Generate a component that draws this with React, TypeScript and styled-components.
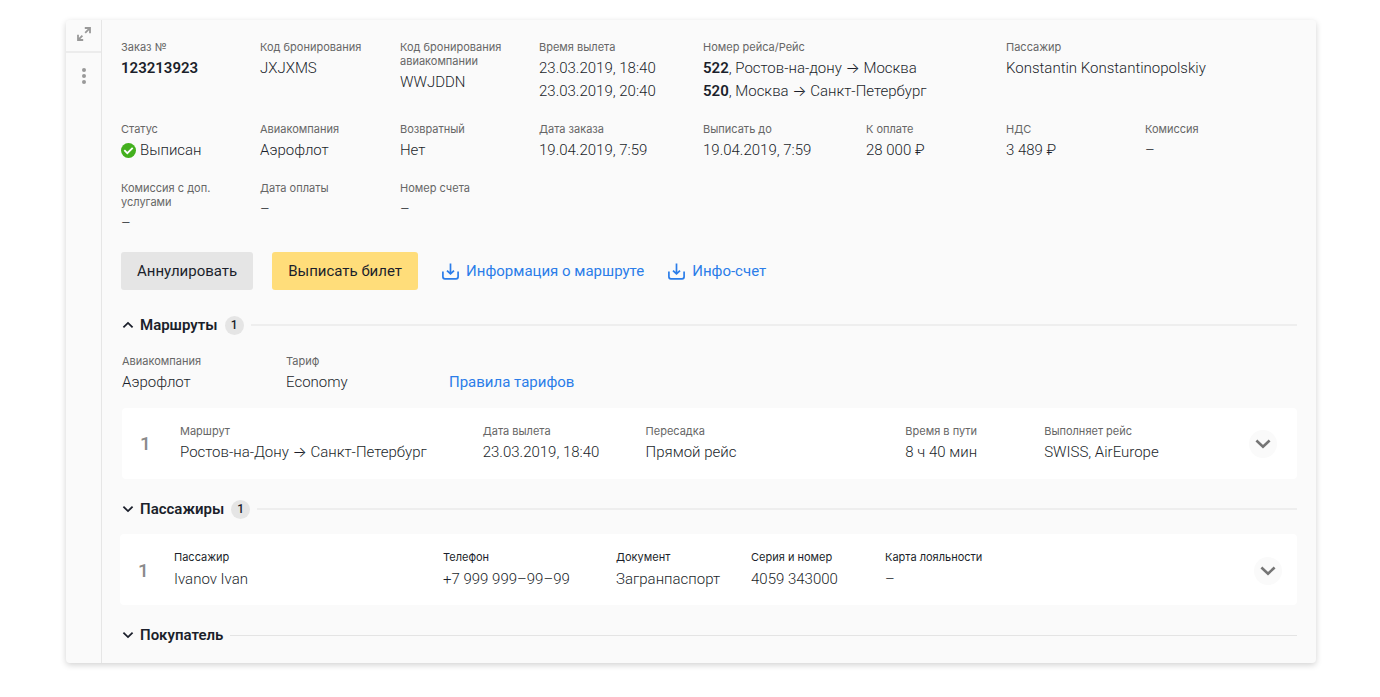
import React from "react";
import styled, { createGlobalStyle } from "styled-components";

const GlobalStyle = createGlobalStyle`
  *, *::before, *::after { box-sizing: border-box; }
  body {
    margin: 0;
    background: #fff;
    color: #1b1f2b;
    font-family: Roboto, "Liberation Sans", sans-serif;
    font-size: 15px;
    font-weight: 300;
    line-height: 23px;
  }
  button { font: inherit; color: inherit; border: 0; padding: 0; background: none; cursor: pointer; }
  h2, p, dl, dt, dd { margin: 0; font: inherit; }
`;

const Page = styled.div`
  padding: 20px 64px 32px 66px;
`;

const OrderCard = styled.article`
  display: flex;
  background: #fafafa;
  border-radius: 4px;
  box-shadow: 0 2px 6px rgba(0, 0, 0, 0.18);
`;

const Rail = styled.aside`
  flex: 0 0 36px;
  display: flex;
  flex-direction: column;
  border-right: 1px solid #e6e6e6;
  color: #999;
`;

const RailButton = styled.button<{ $divided?: boolean }>`
  display: flex;
  align-items: center;
  justify-content: center;
  height: ${(p) => (p.$divided ? 33 : 46)}px;
  padding-bottom: ${(p) => (p.$divided ? 4 : 0)}px;
  border-bottom: ${(p) => (p.$divided ? "2px solid #ececec" : "0")};
`;

const Main = styled.main`
  flex: 1;
  min-width: 0;
  padding: 20px 19px 16px 19px;
`;

const SummaryGrid = styled.dl`
  display: grid;
  grid-template-columns: 139fr 140fr 139fr 164fr 163fr 140fr 139fr 152fr;
  row-gap: 19px;
`;

const FieldBox = styled.div<{ $span?: number }>`
  min-width: 0;
  grid-column: span ${(p) => p.$span ?? 1};
`;

const Label = styled.dt<{ $dark?: boolean }>`
  max-width: 120px;
  margin-bottom: ${(p) => (p.$dark ? 4 : 3)}px;
  font-family: Inter, Roboto, "Liberation Sans", sans-serif;
  font-size: 11px;
  font-weight: 400;
  line-height: 14px;
  color: ${(p) => (p.$dark ? "#1b1f2b" : "#666")};
`;

const Value = styled.dd`
  display: flex;
  align-items: center;
  gap: 4px;
  white-space: nowrap;
`;

const Arrow = styled.span`
  font-family: Inter, sans-serif;
  line-height: 1;
`;

const Strong = styled.strong`
  font-weight: 600;
`;

const Actions = styled.div`
  display: flex;
  align-items: center;
  gap: 24px;
  margin: 17px 0 23px;
`;

const ButtonGroup = styled.div`
  display: flex;
  gap: 19px;
`;

const ActionButton = styled.button<{ $primary?: boolean }>`
  height: 38px;
  padding: 0 16px;
  border-radius: 3px;
  font-weight: 400;
  white-space: nowrap;
  background: ${(p) => (p.$primary ? "#ffdd7a" : "#e5e5e5")};
`;

const Link = styled.a`
  display: inline-flex;
  align-items: center;
  gap: 7px;
  font-weight: 400;
  color: #2b7de9;
  text-decoration: none;
  white-space: nowrap;
`;

const SectionHead = styled.div<{ $thin: boolean }>`
  display: flex;
  align-items: center;
  gap: 7px;
  height: 24px;
  padding-left: 1px;
  &::after {
    content: "";
    flex: 1;
    height: ${(p) => (p.$thin ? 1 : 2)}px;
    background: ${(p) => (p.$thin ? "#e4e4e4" : "#eeeeee")};
  }
`;

const Toggle = styled.button`
  display: flex;
  align-items: center;
  gap: 6px;
  font-weight: 600;
`;

const Badge = styled.span`
  display: inline-flex;
  align-items: center;
  justify-content: center;
  width: 19px;
  height: 19px;
  border-radius: 50%;
  background: #e5e5e5;
  font-size: 12px;
  font-weight: 500;
`;

const FareRow = styled.dl`
  display: grid;
  grid-template-columns: 164fr 163fr 848fr;
  align-items: end;
  padding: 17px 0 14px 1px;
`;

const Panel = styled.section<{ $wide?: boolean }>`
  display: flex;
  align-items: center;
  min-height: 71px;
  margin: ${(p) => (p.$wide ? "13px 0 18px -1px" : "0 0 18px 1px")};
  padding: ${(p) => (p.$wide ? "2px 15px 0 18px" : "0 20px 0 18px")};
  border-radius: 4px;
  background: #fff;
`;

const Index = styled.span<{ $width: number }>`
  flex: 0 0 ${(p) => p.$width}px;
  font-size: 19px;
  font-weight: 500;
  color: #8a8a8a;
`;

const PanelFields = styled.dl<{ $columns: string }>`
  flex: 1;
  display: grid;
  grid-template-columns: ${(p) => p.$columns};
`;

const RoundButton = styled.button`
  display: flex;
  align-items: center;
  justify-content: center;
  width: 28px;
  height: 28px;
  border-radius: 50%;
  background: #fafafa;
  color: #757575;
`;

type FieldProps = { label: string; children: React.ReactNode; span?: number; dark?: boolean };

const Field = ({ label, children, span, dark }: FieldProps) => (
  <FieldBox $span={span}>
    <Label $dark={dark}>{label}</Label>
    {children}
  </FieldBox>
);

const ExpandIcon = () => (
  <svg width="14" height="14" viewBox="0 0 14 14" fill="none" stroke="currentColor" strokeWidth="1.8">
    <path d="M8.2 5.8 12.6 1.4M7.8 1h5.2v5.2M5.4 8.6 1.4 12.6M1 7.8V13h5.2" />
  </svg>
);

const DotsIcon = () => (
  <svg width="6" height="18" viewBox="0 0 6 18" fill="currentColor">
    <circle cx="3" cy="3" r="2" />
    <circle cx="3" cy="9" r="2" />
    <circle cx="3" cy="15" r="2" />
  </svg>
);

const CheckIcon = () => (
  <svg width="15" height="15" viewBox="0 0 15 15" fill="none">
    <circle cx="7.5" cy="7.5" r="7.5" fill="#43b01e" />
    <path d="m3.3 7.2 3 3 5.4-5.4" stroke="#fff" strokeWidth="1.8" />
  </svg>
);

const DownloadIcon = () => (
  <svg width="17" height="17" viewBox="0 0 17 17" fill="none" stroke="currentColor" strokeWidth="1.7">
    <path d="M.9 8.4v5.4q0 2 2 2h11.2q2 0 2-2V8.4M8.5.4v10M5 7.6l3.5 3.3L12 7.6" />
  </svg>
);

const Chevron = ({ up = false }: { up?: boolean }) => (
  <svg width="12" height="8" viewBox="0 0 12 8" fill="none" stroke="currentColor" strokeWidth="1.8">
    <path d={up ? "M1.4 6.3 6 1.9l4.6 4.4" : "M1.4 1.7 6 6.1l4.6-4.4"} />
  </svg>
);

const BigChevron = () => (
  <svg width="16" height="10" viewBox="0 0 16 10" fill="none" stroke="currentColor" strokeWidth="2.6">
    <path d="m1.4 1.5 6.6 6.2 6.6-6.2" />
  </svg>
);

const SectionTitle = ({ title, count, open }: { title: string; count?: number; open?: boolean }) => (
  <SectionHead $thin={count === undefined}>
    <h2>
      <Toggle type="button" aria-expanded={!!open}>
        <Chevron up={open} />
        {title}
      </Toggle>
    </h2>
    {count !== undefined && <Badge>{count}</Badge>}
  </SectionHead>
);

export default function App() {
  return (
    <>
      <GlobalStyle />
      <Page>
        <OrderCard>
          <Rail>
            <RailButton type="button" aria-label="Развернуть" $divided>
              <ExpandIcon />
            </RailButton>
            <RailButton type="button" aria-label="Меню">
              <DotsIcon />
            </RailButton>
          </Rail>
          <Main>
            <SummaryGrid>
              <Field label="Заказ №"><Value><Strong>123213923</Strong></Value></Field>
              <Field label="Код бронирования"><Value>JXJXMS</Value></Field>
              <Field label="Код бронирования авиакомпании"><Value>WWJDDN</Value></Field>
              <Field label="Время вылета">
                <Value>23.03.2019, 18:40</Value>
                <Value>23.03.2019, 20:40</Value>
              </Field>
              <Field label="Номер рейса/Рейс" span={2}>
                <Value><span><Strong>522</Strong>, Ростов-на-дону <Arrow>→</Arrow> Москва</span></Value>
                <Value><span><Strong>520</Strong>, Москва <Arrow>→</Arrow> Санкт-Петербург</span></Value>
              </Field>
              <Field label="Пассажир" span={2}><Value>Konstantin Konstantinopolskiy</Value></Field>

              <Field label="Статус"><Value><CheckIcon />Выписан</Value></Field>
              <Field label="Авиакомпания"><Value>Аэрофлот</Value></Field>
              <Field label="Возвратный"><Value>Нет</Value></Field>
              <Field label="Дата заказа"><Value>19.04.2019, 7:59</Value></Field>
              <Field label="Выписать до"><Value>19.04.2019, 7:59</Value></Field>
              <Field label="К оплате"><Value>28 000 ₽</Value></Field>
              <Field label="НДС"><Value>3 489 ₽</Value></Field>
              <Field label="Комиссия"><Value>–</Value></Field>

              <Field label="Комиссия с доп. услугами"><Value>–</Value></Field>
              <Field label="Дата оплаты"><Value>–</Value></Field>
              <Field label="Номер счета"><Value>–</Value></Field>
            </SummaryGrid>

            <Actions>
              <ButtonGroup>
                <ActionButton type="button">Аннулировать</ActionButton>
                <ActionButton type="button" $primary>Выписать билет</ActionButton>
              </ButtonGroup>
              <Link href="#route"><DownloadIcon />Информация о маршруте</Link>
              <Link href="#invoice"><DownloadIcon />Инфо-счет</Link>
            </Actions>

            <SectionTitle title="Маршруты" count={1} open />
            <FareRow>
              <Field label="Авиакомпания"><Value>Аэрофлот</Value></Field>
              <Field label="Тариф"><Value>Economy</Value></Field>
              <div><Link href="#rules">Правила тарифов</Link></div>
            </FareRow>
            <Panel>
              <Index $width={40}>1</Index>
              <PanelFields $columns="303fr 163fr 260fr 139fr 205fr">
                <Field label="Маршрут"><Value><span>Ростов-на-Дону <Arrow>→</Arrow> Санкт-Петербург</span></Value></Field>
                <Field label="Дата вылета"><Value>23.03.2019, 18:40</Value></Field>
                <Field label="Пересадка"><Value>Прямой рейс</Value></Field>
                <Field label="Время в пути"><Value>8 ч 40 мин</Value></Field>
                <Field label="Выполняет рейс"><Value>SWISS, AirEurope</Value></Field>
              </PanelFields>
              <RoundButton type="button" aria-label="Подробнее о маршруте"><BigChevron /></RoundButton>
            </Panel>

            <SectionTitle title="Пассажиры" count={1} />
            <Panel $wide>
              <Index $width={36}>1</Index>
              <PanelFields $columns="269fr 173fr 135fr 134fr 369fr">
                <Field dark label="Пассажир"><Value>Ivanov Ivan</Value></Field>
                <Field dark label="Телефон"><Value>+7 999 999–99–99</Value></Field>
                <Field dark label="Документ"><Value>Загранпаспорт</Value></Field>
                <Field dark label="Серия и номер"><Value>4059 343000</Value></Field>
                <Field dark label="Карта лояльности"><Value>–</Value></Field>
              </PanelFields>
              <RoundButton type="button" aria-label="Подробнее о пассажире"><BigChevron /></RoundButton>
            </Panel>

            <SectionTitle title="Покупатель" />
          </Main>
        </OrderCard>
      </Page>
    </>
  );
}
